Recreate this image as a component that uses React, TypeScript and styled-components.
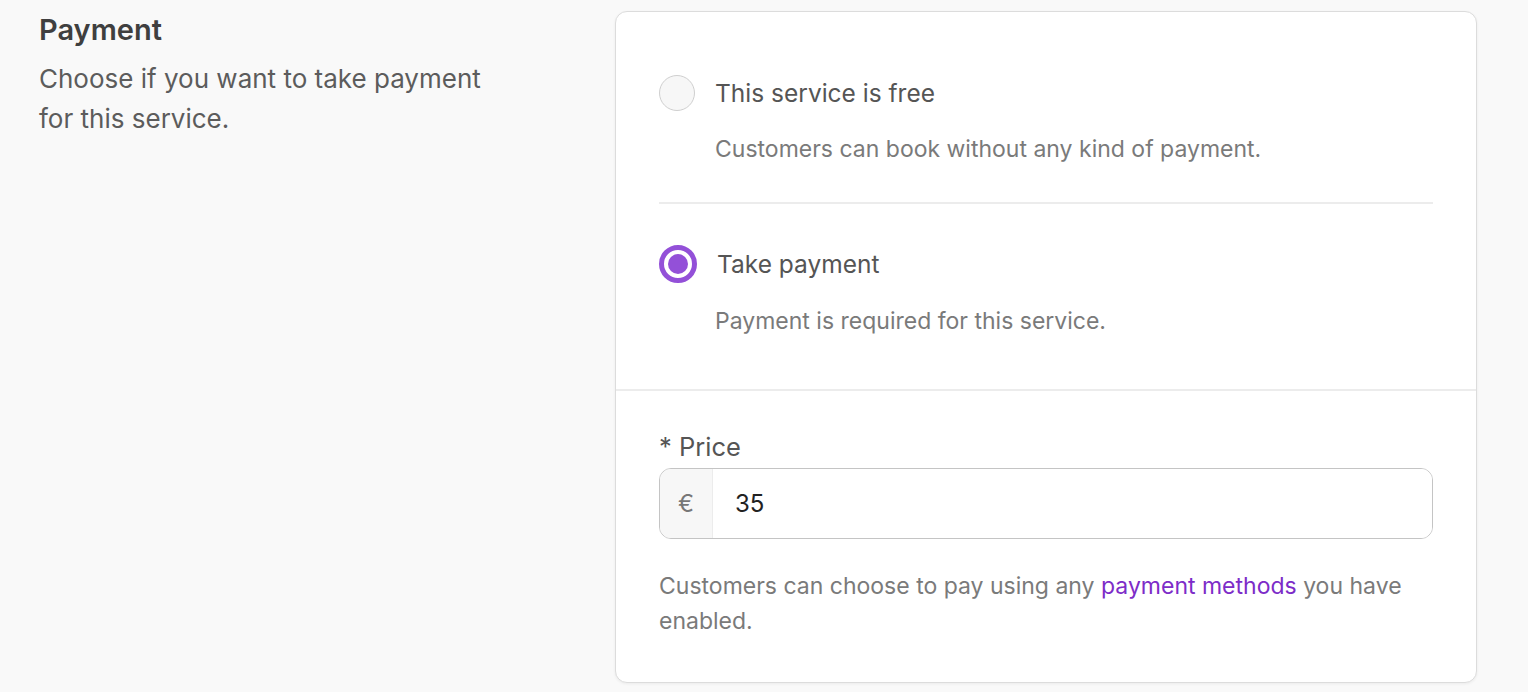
import React from "react";
import styled, { createGlobalStyle } from "styled-components";

const Global = createGlobalStyle`
  html, body { margin: 0; padding: 0; background: #f9f9f9; }
  body { font-family: Inter, "Noto Sans", sans-serif; -webkit-font-smoothing: antialiased; }
`;

const Page = styled.div`
  display: grid;
  grid-template-columns: 576px 862px;
  padding: 11px 0 0 39px;
  min-height: 692px;
  box-sizing: border-box;
`;

const Intro = styled.div`
  display: flex;
  flex-direction: column;
`;

const Title = styled.h2`
  margin: 0;
  font-size: 29px;
  font-weight: 600;
  line-height: 38px;
  color: #3f3f3f;
`;

const Lead = styled.p`
  margin: 10px 0 0;
  font-size: 26px;
  line-height: 40px;
  color: #5c5c5c;
  width: 475px;
`;

const Card = styled.section`
  background: #fff;
  border: 1px solid #dcdcdc;
  border-radius: 12px;
  box-shadow: 0 1px 3px rgba(0, 0, 0, 0.06);
  height: 672px;
  box-sizing: border-box;
  display: flex;
  flex-direction: column;
`;

const Options = styled.div`
  padding: 43px 43px 0;
  border-bottom: 2px solid #ececec;
  display: flex;
  flex-direction: column;
`;

const Option = styled.label<{ $last?: boolean }>`
  display: grid;
  grid-template-columns: 56px 1fr;
  row-gap: 22px;
  align-items: center;
  padding: ${(p) => (p.$last ? "41px 0 52px" : "20px 0 37px")};
  border-bottom: ${(p) => (p.$last ? "none" : "2px solid #ececec")};
  cursor: pointer;
`;

const Radio = styled.span<{ $checked?: boolean }>`
  width: ${(p) => (p.$checked ? 38 : 36)}px;
  height: ${(p) => (p.$checked ? 38 : 36)}px;
  box-sizing: border-box;
  border-radius: 50%;
  display: flex;
  align-items: center;
  justify-content: center;
  background: ${(p) => (p.$checked ? "#fff" : "#f7f7f7")};
  border: ${(p) => (p.$checked ? "5px solid #9350d8" : "1px solid #cfcfcf")};
  &::after {
    content: "";
    display: ${(p) => (p.$checked ? "block" : "none")};
    width: 20px;
    height: 20px;
    border-radius: 50%;
    background: #9350d8;
  }
`;

const OptionLabel = styled.span<{ $shift?: number }>`
  font-size: 24.5px;
  line-height: 32px;
  color: #555;
  margin-left: ${(p) => p.$shift ?? 0}px;
`;

const OptionHint = styled.span`
  grid-column: 2;
  font-size: 23px;
  line-height: 32px;
  color: #7a7a7a;
`;

const PriceArea = styled.div`
  padding: 39px 43px 0;
  display: flex;
  flex-direction: column;
`;

const FieldLabel = styled.div`
  font-size: 25.5px;
  line-height: 34px;
  color: #555;
  margin-bottom: 4px;
`;

const InputGroup = styled.div`
  display: flex;
  height: 71px;
  box-sizing: border-box;
  border: 1px solid #c4c4c4;
  border-radius: 12px;
  overflow: hidden;
  box-shadow: inset 0 2px 3px rgba(0, 0, 0, 0.04);
`;

const Prefix = styled.span`
  width: 52px;
  display: flex;
  align-items: center;
  justify-content: center;
  background: #f7f7f7;
  border-right: 1px solid #ececec;
  color: #777;
  font-size: 24px;
`;

const Input = styled.input`
  flex: 1;
  border: none;
  outline: none;
  padding: 0 22px;
  font-family: inherit;
  font-size: 24px;
  color: #222;
  background: #fff;
`;

const Help = styled.p`
  margin: 30px 0 0;
  font-size: 23px;
  line-height: 35px;
  color: #7a7a7a;
`;

const Link = styled.a`
  color: #7d2cc8;
  text-decoration: none;
`;

export default function App() {
  return (
    <>
      <Global />
      <Page>
        <Intro>
          <Title>Payment</Title>
          <Lead>Choose if you want to take payment for this service.</Lead>
        </Intro>
        <Card>
          <Options>
            <Option>
              <Radio />
              <OptionLabel>This service is free</OptionLabel>
              <OptionHint>Customers can book without any kind of payment.</OptionHint>
            </Option>
            <Option $last>
              <Radio $checked />
              <OptionLabel $shift={2}>Take payment</OptionLabel>
              <OptionHint>Payment is required for this service.</OptionHint>
            </Option>
          </Options>
          <PriceArea>
            <FieldLabel>* Price</FieldLabel>
            <InputGroup>
              <Prefix>€</Prefix>
              <Input defaultValue="35" />
            </InputGroup>
            <Help>
              Customers can choose to pay using any <Link href="#">payment methods</Link> you have
              enabled.
            </Help>
          </PriceArea>
        </Card>
      </Page>
    </>
  );
}
